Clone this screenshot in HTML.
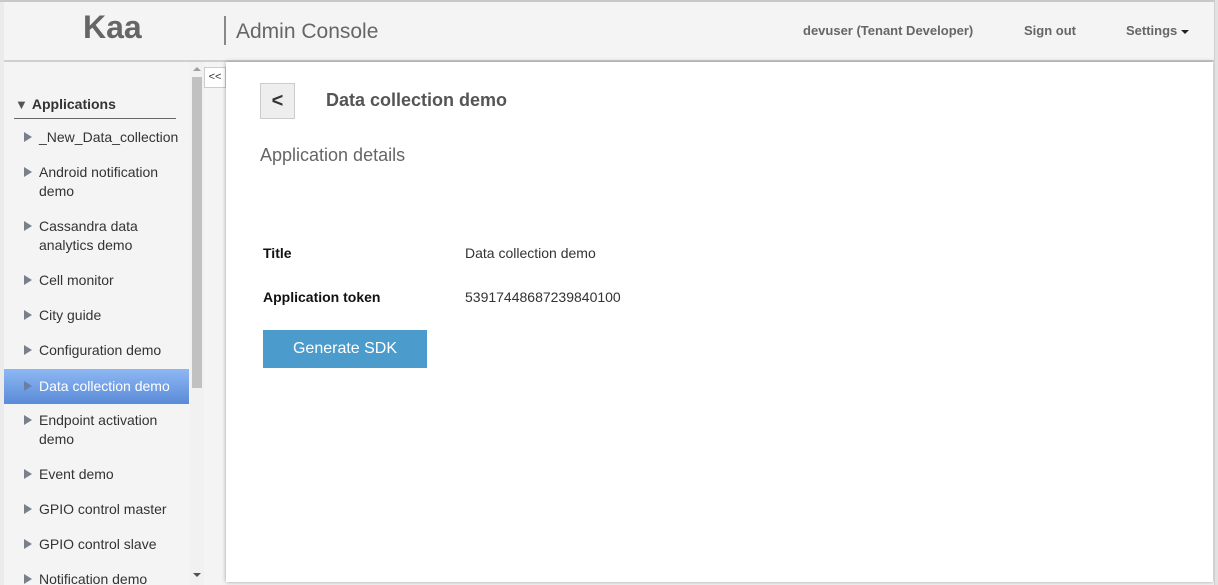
<!DOCTYPE html>
<html><head><style>
*{margin:0;padding:0;box-sizing:border-box}
body{width:1218px;height:585px;overflow:hidden;background:#f4f4f4;font-family:"Liberation Sans",Arial,sans-serif;position:relative}
.abs{position:absolute}
.topline{left:0;top:0;width:1218px;height:2px;background:#c8c8c8}
.leftedge{left:0;top:0;width:4px;height:585px;background:#ebebeb}
.rightedge{left:1214px;top:0;width:4px;height:585px;background:#e2e2e2;border-left:1px solid #cfcfcf}
.hline{left:4px;top:60px;width:1210px;height:2px;background:#cfcfcf}
.kaa{left:83px;top:9px;font-size:32px;font-weight:bold;color:#666}
.sep{left:224px;top:16px;width:2px;height:29px;background:#888}
.ac{left:236px;top:20px;font-size:21px;color:#666}
.nav{top:23px;font-size:13px;font-weight:bold;color:#666}
.main{left:226px;top:62px;width:987px;height:520px;background:#fff;box-shadow:0 0 4px rgba(0,0,0,.35)}
.side{left:4px;top:62px;width:186px;height:523px;overflow:hidden}
.apps{position:absolute;left:14px;top:96px;width:162px;height:23px;border-bottom:1px solid #666;font-size:14px;font-weight:bold;color:#333}
.apps span{font-size:13px;color:#555;margin:0 4px 0 1px}
.item{position:absolute;left:0;width:185px;padding:8px 0 8px 35px;font-size:14px;line-height:19px;color:#333}
.item:before{content:"";position:absolute;left:20px;top:12px;border-left:8px solid #7a7f8c;border-top:5px solid transparent;border-bottom:5px solid transparent}
.sel{background:linear-gradient(#8eb8f4,#5a8bd8);color:#fff}
.sel:before{border-left-color:#6a7fa8}
.track{left:190px;top:62px;width:14px;height:523px;background:#f1f1f1}
.thumb{left:192px;top:77px;width:10px;height:311px;background:#c1c1c1}
.btn2{left:204px;top:67px;width:22px;height:21px;border:1px solid #ccc;background:#fff;font-size:11px;color:#333;text-align:center;line-height:18px}
.back{left:260px;top:83px;width:35px;height:36px;background:#eee;border:1px solid #ccc;font-size:20px;font-weight:bold;color:#333;text-align:center;line-height:35px}
</style></head><body>
<div class="abs leftedge"></div>
<div class="abs topline"></div>
<div class="abs kaa">Kaa</div>
<div class="abs sep"></div>
<div class="abs ac">Admin Console</div>
<div class="abs nav" style="left:803px">devuser (Tenant Developer)</div>
<div class="abs nav" style="left:1024px">Sign out</div>
<div class="abs nav" style="left:1126px">Settings <span style="display:inline-block;border-top:4px solid #222;border-left:4px solid transparent;border-right:4px solid transparent;vertical-align:middle"></span></div>
<div class="abs hline"></div>
<div class="abs side">
<div class="apps" style="top:34px;left:10px"><span>▼</span>Applications</div>
<div class="item" style="top:58px">_New_Data_collection</div>
<div class="item" style="top:93px">Android notification demo</div>
<div class="item" style="top:147px">Cassandra data analytics demo</div>
<div class="item" style="top:201px">Cell monitor</div>
<div class="item" style="top:236px">City guide</div>
<div class="item" style="top:271px">Configuration demo</div>
<div class="item sel" style="top:307px">Data collection demo</div>
<div class="item" style="top:341px">Endpoint activation demo</div>
<div class="item" style="top:395px">Event demo</div>
<div class="item" style="top:430px">GPIO control master</div>
<div class="item" style="top:465px">GPIO control slave</div>
<div class="item" style="top:500px">Notification demo</div>
</div>
<div class="abs track"></div>
<div class="abs thumb"></div>
<div class="abs" style="left:193px;top:67px;border-bottom:4px solid #a0a0a0;border-left:4px solid transparent;border-right:4px solid transparent"></div>
<div class="abs" style="left:193px;top:573px;border-top:4px solid #505050;border-left:4px solid transparent;border-right:4px solid transparent"></div>
<div class="abs btn2">&lt;&lt;</div>
<div class="abs main"></div>
<div class="abs rightedge"></div>
<div class="abs back">&lt;</div>
<div class="abs" style="left:326px;top:90px;font-size:18px;font-weight:bold;color:#555">Data collection demo</div>
<div class="abs" style="left:260px;top:145px;font-size:18px;color:#666">Application details</div>
<div class="abs" style="left:263px;top:245px;font-size:14px;font-weight:bold;color:#111">Title</div>
<div class="abs" style="left:465px;top:245px;font-size:14px;color:#333">Data collection demo</div>
<div class="abs" style="left:263px;top:289px;font-size:14px;font-weight:bold;color:#111">Application token</div>
<div class="abs" style="left:465px;top:289px;font-size:14px;color:#333">53917448687239840100</div>
<div class="abs" style="left:263px;top:330px;width:164px;height:38px;background:#4b9bcc;color:#fff;font-size:16px;text-align:center;line-height:38px">Generate SDK</div>
</body></html>
